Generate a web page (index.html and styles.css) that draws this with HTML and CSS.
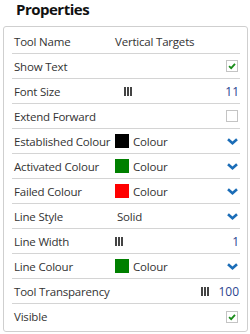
FILE: index.html
```html
<!DOCTYPE html>
<html lang="en">
<head>
    <meta charset="UTF-8">
    <meta name="viewport" content="width=device-width, initial-scale=1.0">
    <title>Properties</title>
    <link rel="stylesheet" href="styles.css">
</head>
<body>
    <h1 class="title">Properties</h1>

    <div class="panel">
        <div class="row">
            <span class="label">Tool Name</span>
            <span class="value">Vertical Targets</span>
        </div>

        <div class="row">
            <span class="label">Show Text</span>
            <span></span>
            <span class="end"><span class="checkbox checked"><svg viewBox="0 0 12 12"><path d="M2.5 6.2 L5 8.6 L9.6 3.4"/></svg></span></span>
        </div>

        <div class="row">
            <span class="label">Font Size</span>
            <span class="slider"><span class="thumb" style="margin-left: 9px"><i></i><i></i><i></i></span></span>
            <span class="end number">11</span>
        </div>

        <div class="row">
            <span class="label">Extend Forward</span>
            <span></span>
            <span class="end"><span class="checkbox"></span></span>
        </div>

        <div class="row">
            <span class="label">Established Colour</span>
            <span class="value colour"><span class="swatch" style="background: #000000"></span>Colour</span>
            <span class="end"><svg class="chevron" viewBox="0 0 11 7"><path d="M1 1.2 L5.5 5.2 L10 1.2"/></svg></span>
        </div>

        <div class="row">
            <span class="label">Activated Colour</span>
            <span class="value colour"><span class="swatch" style="background: #008000"></span>Colour</span>
            <span class="end"><svg class="chevron" viewBox="0 0 11 7"><path d="M1 1.2 L5.5 5.2 L10 1.2"/></svg></span>
        </div>

        <div class="row">
            <span class="label">Failed Colour</span>
            <span class="value colour"><span class="swatch" style="background: #ff0000"></span>Colour</span>
            <span class="end"><svg class="chevron" viewBox="0 0 11 7"><path d="M1 1.2 L5.5 5.2 L10 1.2"/></svg></span>
        </div>

        <div class="row">
            <span class="label">Line Style</span>
            <span class="value solid">Solid</span>
            <span class="end"><svg class="chevron" viewBox="0 0 11 7"><path d="M1 1.2 L5.5 5.2 L10 1.2"/></svg></span>
        </div>

        <div class="row">
            <span class="label">Line Width</span>
            <span class="slider"><span class="thumb" style="margin-left: 0px"><i></i><i></i><i></i></span></span>
            <span class="end number">1</span>
        </div>

        <div class="row">
            <span class="label">Line Colour</span>
            <span class="value colour"><span class="swatch" style="background: #008000"></span>Colour</span>
            <span class="end"><svg class="chevron" viewBox="0 0 11 7"><path d="M1 1.2 L5.5 5.2 L10 1.2"/></svg></span>
        </div>

        <div class="row">
            <span class="label">Tool Transparency</span>
            <span class="slider"><span class="thumb" style="margin-left: 86px"><i></i><i></i><i></i></span></span>
            <span class="end number">100</span>
        </div>

        <div class="row">
            <span class="label">Visible</span>
            <span></span>
            <span class="end"><span class="checkbox checked"><svg viewBox="0 0 12 12"><path d="M2.5 6.2 L5 8.6 L9.6 3.4"/></svg></span></span>
        </div>
    </div>
</body>
</html>
```

FILE: styles.css
```css
* {
    margin: 0;
    padding: 0;
    box-sizing: border-box;
}

body {
    font-family: 'Open Sans', 'Liberation Sans', sans-serif;
    background: white;
    color: #333;
}

.title {
    font-size: 15px;
    font-weight: 700;
    line-height: 18px;
    letter-spacing: -0.5px;
    color: #111;
    padding-left: 16px;
}

.panel {
    margin: 8px 2px 0 3px;
    border: 1px solid #cfcfcf;
    border-radius: 3px;
    padding: 2px 7px 2px 8px;
}

.row {
    display: grid;
    grid-template-columns: 101px 1fr 28px;
    align-items: center;
    height: 25px;
    padding: 0 1px 0 2px;
    border-bottom: 1px solid #d4d4d4;
    font-size: 11.5px;
    letter-spacing: -0.2px;
    white-space: nowrap;
}

.row:last-child {
    border-bottom: none;
}

.label {
    color: #333;
}

.value {
    color: #333;
}

.solid {
    padding-left: 2px;
}

.colour {
    display: flex;
    align-items: center;
    gap: 4px;
}

.swatch {
    width: 14px;
    height: 14px;
    display: inline-block;
}

.end {
    display: flex;
    justify-content: flex-end;
    align-items: center;
}

.number {
    color: #2a4590;
    font-size: 12px;
    letter-spacing: 0;
}

.checkbox {
    width: 12px;
    height: 12px;
    border: 1px solid #c4c4c4;
    background: white;
    display: block;
    margin-right: 1px;
}

.checkbox svg {
    display: block;
    width: 10px;
    height: 10px;
}

.checkbox path {
    fill: none;
    stroke: #1a8c1a;
    stroke-width: 2.2;
}

.chevron {
    display: block;
    width: 11px;
    height: 7px;
    margin-right: 1px;
}

.chevron path {
    fill: none;
    stroke: #1b6db7;
    stroke-width: 2.6;
}

.slider {
    display: flex;
    align-items: center;
}

.thumb {
    display: flex;
    gap: 1px;
    height: 9px;
}

.thumb i {
    width: 2px;
    height: 9px;
    background: #444;
}
```
